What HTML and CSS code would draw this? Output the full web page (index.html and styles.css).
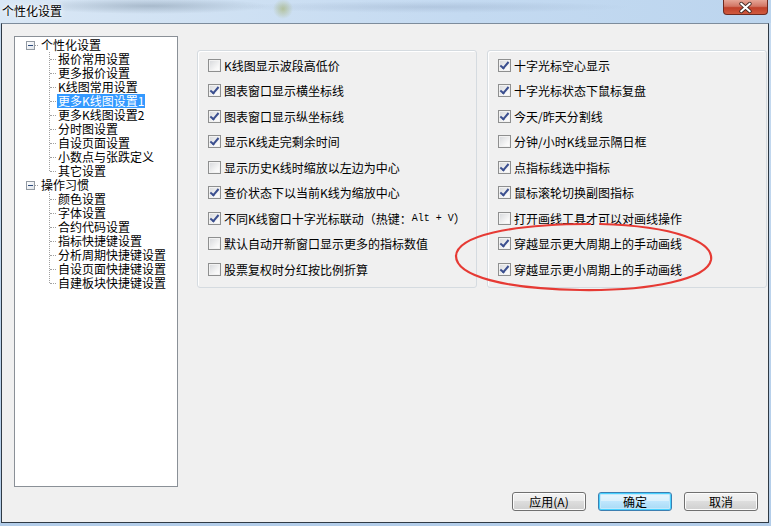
FILE: index.html
```html
<!DOCTYPE html>
<html lang="zh-CN">
<head>
    <meta charset="UTF-8">
    <title>个性化设置</title>
    <link rel="stylesheet" href="styles.css">
</head>
<body>
    <div class="window">
        <!-- Title bar -->
        <div class="titlebar">
            <span class="title">个性化设置</span>
            <span class="close">
                <svg width="45" height="15" viewBox="0 0 45 15">
                    <path d="M18 3.5 L27 11.5 M27 3.5 L18 11.5" stroke="#3a2520" stroke-width="4" stroke-linecap="round"/>
                    <path d="M18 3.5 L27 11.5 M27 3.5 L18 11.5" stroke="#ffffff" stroke-width="2.2" stroke-linecap="round"/>
                </svg>
            </span>
        </div>

        <div class="client">
            <div class="main">
                <!-- Settings tree -->
                <div class="tree">
                    <div class="root">
                        <div class="root-label"><span class="toggle"></span><span class="text">个性化设置</span></div>
                        <div class="children">
                            <div class="leaf"><span class="text">报价常用设置</span></div>
                            <div class="leaf"><span class="text">更多报价设置</span></div>
                            <div class="leaf"><span class="text">K线图常用设置</span></div>
                            <div class="leaf"><span class="text selected">更多K线图设置1</span></div>
                            <div class="leaf"><span class="text">更多K线图设置2</span></div>
                            <div class="leaf"><span class="text">分时图设置</span></div>
                            <div class="leaf"><span class="text">自设页面设置</span></div>
                            <div class="leaf"><span class="text">小数点与张跌定义</span></div>
                            <div class="leaf"><span class="text">其它设置</span></div>
                        </div>
                    </div>
                    <div class="root">
                        <div class="root-label"><span class="toggle"></span><span class="text">操作习惯</span></div>
                        <div class="children">
                            <div class="leaf"><span class="text">颜色设置</span></div>
                            <div class="leaf"><span class="text">字体设置</span></div>
                            <div class="leaf"><span class="text">合约代码设置</span></div>
                            <div class="leaf"><span class="text">指标快捷键设置</span></div>
                            <div class="leaf"><span class="text">分析周期快捷键设置</span></div>
                            <div class="leaf"><span class="text">自设页面快捷键设置</span></div>
                            <div class="leaf"><span class="text">自建板块快捷键设置</span></div>
                        </div>
                    </div>
                </div>

                <!-- Left option group -->
                <div class="group">
                    <div class="option"><span class="box"></span>K线图显示波段高低价</div>
                    <div class="option"><span class="box on"></span>图表窗口显示横坐标线</div>
                    <div class="option"><span class="box on"></span>图表窗口显示纵坐标线</div>
                    <div class="option"><span class="box on"></span>显示K线走完剩余时间</div>
                    <div class="option"><span class="box"></span>显示历史K线时缩放以左边为中心</div>
                    <div class="option"><span class="box on"></span>查价状态下以当前K线为缩放中心</div>
                    <div class="option"><span class="box on"></span>不同K线窗口十字光标联动（热键：<span class="mono">Alt + V</span>）</div>
                    <div class="option"><span class="box"></span>默认自动开新窗口显示更多的指标数值</div>
                    <div class="option"><span class="box"></span>股票复权时分红按比例折算</div>
                </div>

                <!-- Right option group -->
                <div class="group right">
                    <div class="option"><span class="box on"></span>十字光标空心显示</div>
                    <div class="option"><span class="box on"></span>十字光标状态下鼠标复盘</div>
                    <div class="option"><span class="box on"></span>今天/昨天分割线</div>
                    <div class="option"><span class="box"></span>分钟/小时K线显示隔日框</div>
                    <div class="option"><span class="box on"></span>点指标线选中指标</div>
                    <div class="option"><span class="box on"></span>鼠标滚轮切换副图指标</div>
                    <div class="option"><span class="box"></span>打开画线工具才可以对画线操作</div>
                    <div class="option"><span class="box on"></span>穿越显示更大周期上的手动画线</div>
                    <div class="option"><span class="box on"></span>穿越显示更小周期上的手动画线</div>
                </div>
            </div>

            <!-- Dialog buttons -->
            <div class="actions">
                <button class="btn">应用(A)</button>
                <button class="btn default">确定</button>
                <button class="btn">取消</button>
            </div>
        </div>

        <!-- Hand-drawn highlight ring -->
        <svg class="ring" width="771" height="526" viewBox="0 0 771 526">
            <path d="M600 224 C675 226 714 242 711 260 C707 279 652 291 580 290 C505 289 456 276 456 256 C457 236 510 224 590 224" fill="none" stroke="#e63a34" stroke-width="2.2" stroke-linecap="round"/>
        </svg>
    </div>
</body>
</html>
```

FILE: styles.css
```css
body {
    margin: 0;
    width: 771px;
    height: 526px;
    overflow: hidden;
    font-family: "Noto Sans CJK SC", "Liberation Sans", sans-serif;
    font-size: 12px;
    color: #000;
    background: linear-gradient(#c7dbf0, #b3cde9);
}
.window {
    position: relative;
    height: 526px;
}
.titlebar {
    height: 23px;
    display: flex;
    justify-content: space-between;
    align-items: flex-start;
    background:
        radial-gradient(ellipse 120px 8px at 150px 6px, rgba(90, 110, 130, 0.35), transparent),
        radial-gradient(ellipse 10px 10px at 283px 9px, rgba(150, 160, 60, 0.45), transparent),
        radial-gradient(ellipse 200px 6px at 430px 7px, rgba(120, 140, 170, 0.25), transparent),
        linear-gradient(90deg, #d9e7f5, #c4daf1 60%, #bcd5ee);
}
.title {
    padding: 3px 0 0 2px;
    line-height: 16px;
    text-shadow: 0 0 6px #fff, 0 0 3px #fff;
}
.close {
    width: 45px;
    height: 15px;
    margin-right: 3px;
    border: 1px solid #6e2a20;
    border-top: none;
    border-radius: 0 0 4px 4px;
    background: linear-gradient(#e6a596, #d27665 45%, #c0402a 55%, #d05a3e);
    box-sizing: border-box;
    display: flex;
}
.client {
    margin-left: 1px;
    width: 768px;
    height: 500px;
    box-sizing: border-box;
    border: 1px solid #2f3a45;
    border-top-color: #7d8c9c;
    background: #f0f0f0;
    padding: 12px 0 0 12px;
}
.main {
    display: flex;
    align-items: flex-start;
}

/* tree */
.tree {
    width: 164px;
    height: 451px;
    box-sizing: border-box;
    border: 1px solid #8a9097;
    background: #fff;
    padding-top: 1px;
}
.root-label {
    position: relative;
    height: 14px;
    line-height: 14px;
    padding-left: 25px;
}
.root-label::before {
    content: "";
    position: absolute;
    left: 20px;
    top: 7px;
    width: 3px;
    border-top: 1px dotted #a0a0a0;
}
.toggle {
    position: absolute;
    left: 11px;
    top: 3px;
    width: 9px;
    height: 9px;
    box-sizing: border-box;
    border: 1px solid #929aa3;
    background: linear-gradient(135deg, #ffffff, #dfe3e8);
}
.toggle::after {
    content: "";
    position: absolute;
    left: 1px;
    top: 3px;
    width: 5px;
    height: 1px;
    background: #2b4a7d;
}
.children {
    position: relative;
    margin-left: 34px;
}
.children::before {
    content: "";
    position: absolute;
    left: 0;
    top: 0;
    bottom: 7px;
    border-left: 1px dotted #a0a0a0;
}
.leaf {
    position: relative;
    height: 14px;
    line-height: 14px;
    padding-left: 8px;
}
.leaf::before {
    content: "";
    position: absolute;
    left: 1px;
    top: 7px;
    width: 6px;
    border-top: 1px dotted #a0a0a0;
}
.text {
    display: inline-block;
    vertical-align: top;
    height: 14px;
    line-height: 14px;
    padding: 0 1px;
    white-space: nowrap;
}
.selected {
    background: #3399ff;
    color: #fff;
}

/* option groups */
.group {
    width: 280px;
    height: 238px;
    margin: 14px 0 0 19px;
    box-sizing: border-box;
    border: 1px solid #d5dbe0;
    border-radius: 3px;
    box-shadow: inset 1px 1px 0 #fff;
    padding: 6px 0 0 10px;
    display: flex;
    flex-direction: column;
    gap: 9.5px;
}
.group.right {
    margin-left: 10px;
}
.option {
    display: flex;
    align-items: center;
    height: 16px;
    white-space: nowrap;
}
.box {
    position: relative;
    width: 13px;
    height: 13px;
    margin-right: 3px;
    box-sizing: border-box;
    border: 1px solid #8e8f8f;
    background: linear-gradient(135deg, #d5d7da, #f7f7f7 70%, #ffffff);
    box-shadow: inset 0 0 0 1px #f2f2f2;
    flex: none;
}
.box.on::after {
    content: "";
    position: absolute;
    left: 3px;
    top: 0;
    width: 3px;
    height: 7px;
    border: solid #3b4f8f;
    border-width: 0 2px 2px 0;
    transform: rotate(40deg);
}
.mono {
    font-family: "Liberation Mono", monospace;
    font-size: 10px;
}

/* buttons */
.actions {
    display: flex;
    justify-content: flex-end;
    gap: 12px;
    margin-top: 5px;
    padding-right: 10px;
}
.btn {
    width: 74px;
    height: 19px;
    padding: 0;
    font-family: inherit;
    font-size: 12px;
    line-height: 17px;
    color: #000;
    border: 1px solid #707070;
    border-radius: 3px;
    background: linear-gradient(#f2f2f2, #ebebeb 50%, #dddddd 50%, #cfcfcf);
    box-shadow: inset 0 0 0 1px #fcfcfc;
}
.btn.default {
    border-color: #3c7fb1;
    box-shadow: inset 0 0 0 1px #48d1ff, inset 0 0 0 2px #c4e8fa;
    background: linear-gradient(#eaf6fd, #d9f0fc 50%, #bee6fd 50%, #a7d9f5);
}

.ring {
    position: absolute;
    left: 0;
    top: 0;
    pointer-events: none;
}
```
